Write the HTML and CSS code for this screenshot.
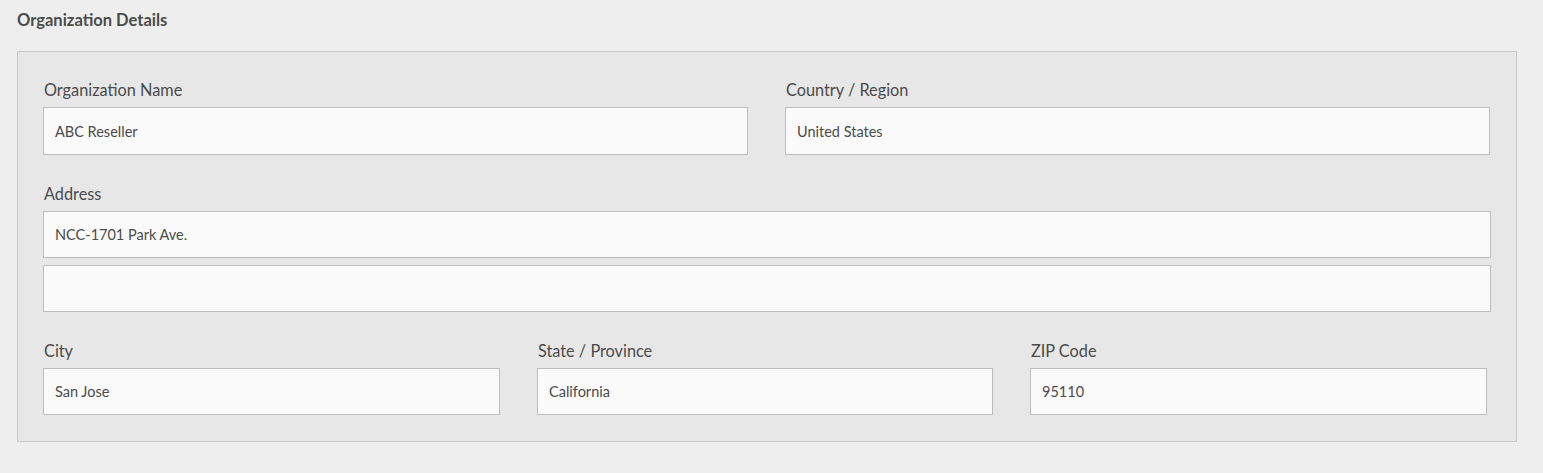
FILE: index.html
```html
<!DOCTYPE html>
<html lang="en">
<head>
<meta charset="utf-8">
<title>Organization Details</title>
<link rel="stylesheet" href="styles.css">
</head>
<body>
<main class="page">
  <h2 class="section-title">Organization Details</h2>
  <section class="panel">
    <div class="row cols-2">
      <div class="field">
        <label class="label">Organization Name</label>
        <div class="input">ABC Reseller</div>
      </div>
      <div class="field">
        <label class="label">Country / Region</label>
        <div class="input">United States</div>
      </div>
    </div>
    <div class="row">
      <div class="field">
        <label class="label">Address</label>
        <div class="input">NCC-1701 Park Ave.</div>
        <div class="input input-extra"></div>
      </div>
    </div>
    <div class="row cols-3">
      <div class="field">
        <label class="label">City</label>
        <div class="input">San Jose</div>
      </div>
      <div class="field">
        <label class="label">State / Province</label>
        <div class="input">California</div>
      </div>
      <div class="field">
        <label class="label">ZIP Code</label>
        <div class="input">95110</div>
      </div>
    </div>
  </section>
</main>
</body>
</html>
```

FILE: styles.css
```css
* { box-sizing: border-box; }
html, body {
  margin: 0;
  background: #eeeeee;
}
body {
  font-family: "Lato", "Open Sans", "Liberation Sans", sans-serif;
  color: #4b4b4b;
}
.page {
  padding: 10px 27px 0 17px;
}
.section-title {
  margin: 0;
  font-size: 16.5px;
  font-weight: 700;
  line-height: 20px;
  color: #4b4b4b;
}
.panel {
  margin-top: 21px;
  background: #e7e7e7;
  border: 1px solid #c8c8c8;
  padding: 27px 25px 26px 25px;
  width: 1500px;
}
.row {
  display: grid;
  grid-template-columns: 1fr;
  column-gap: 37px;
}
.row + .row { margin-top: 28px; }
.cols-2 { grid-template-columns: 705px 705px; }
.cols-3 { grid-template-columns: 457px 456px 457px; column-gap: 37px; }
.field {
  display: flex;
  flex-direction: column;
}
.label {
  font-size: 16.3px;
  line-height: 22px;
  margin-bottom: 6px;
  color: #4b4b4b;
  padding-left: 1px;
}
.input {
  height: 47px;
  background: #fafafa;
  border: 1px solid #bdbdbd;
  padding: 0 11px;
  display: flex;
  align-items: center;
  font-size: 14.5px;
  color: #4b4b4b;
}
.cols-2 .input { height: 48px; }
.input-extra { margin-top: 7px; }
```
